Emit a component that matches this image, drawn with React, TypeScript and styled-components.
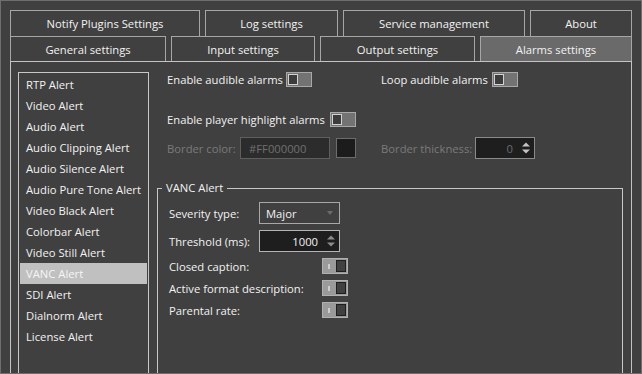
import * as React from 'react';
import styled, { createGlobalStyle } from 'styled-components';

const GlobalStyle = createGlobalStyle`
	html, body {
		margin: 0;
		padding: 0;
		background: #404040;
	}
	body {
		font-family: 'Open Sans', 'Noto Sans', sans-serif;
		font-size: 11.25px;
		color: #f2f2f2;
	}
	* {
		box-sizing: border-box;
	}
`;

const ROW_ONE = [
	{ title: 'Notify Plugins Settings', width: 190 },
	{ title: 'Log settings', width: 133 },
	{ title: 'Service management', width: 182 },
	{ title: 'About' }
];

const ROW_TWO = [
	{ title: 'General settings', width: 156 },
	{ title: 'Input settings', width: 144 },
	{ title: 'Output settings', width: 155 },
	{ title: 'Alarms settings', active: true }
];

const ALERTS = [
	'RTP Alert',
	'Video Alert',
	'Audio Alert',
	'Audio Clipping Alert',
	'Audio Silence Alert',
	'Audio Pure Tone Alert',
	'Video Black Alert',
	'Colorbar Alert',
	'Video Still Alert',
	'VANC Alert',
	'SDI Alert',
	'Dialnorm Alert',
	'License Alert'
];

const SpinArrows = ({ color }: { color: string }) => (
	<svg width='8' height='12' viewBox='0 0 8 12'>
		<polygon points='0,4.5 4,0.5 8,4.5' fill={color} />
		<polygon points='0,7.5 8,7.5 4,11.5' fill={color} />
	</svg>
);

const Toggle = ({ on, disabled }: { on?: boolean; disabled?: boolean }) =>
	on ? (
		<ToggleTrack $on $disabled={disabled}>
			<OnMark />
			<Knob $on />
		</ToggleTrack>
	) : (
		<ToggleTrack>
			<Knob />
		</ToggleTrack>
	);

export default function App() {
	return (
		<>
			<GlobalStyle />
			<Window>
				<TabRow>
					{ROW_ONE.map(tab => (
						<Tab key={tab.title} $w={tab.width} $h={26}>
							{tab.title}
						</Tab>
					))}
				</TabRow>
				<TabRow>
					{ROW_TWO.map(tab => (
						<Tab key={tab.title} $w={tab.width} $h={25} $active={tab.active}>
							{tab.title}
						</Tab>
					))}
				</TabRow>
				<Pane>
					<AlertList>
						{ALERTS.map(alert => (
							<AlertItem key={alert} $selected={alert === 'VANC Alert'}>
								{alert}
							</AlertItem>
						))}
					</AlertList>
					<Settings>
						<OptionRow $top={0} $h={15}>
							<Cell>
								<Label $w={119}>Enable audible alarms</Label>
								<Toggle />
							</Cell>
							<Cell>
								<Label $w={111}>Loop audible alarms</Label>
								<Toggle />
							</Cell>
						</OptionRow>
						<OptionRow $top={25} $h={15}>
							<Cell>
								<Label $w={163}>Enable player highlight alarms</Label>
								<Toggle />
							</Cell>
						</OptionRow>
						<OptionRow $top={10} $h={22}>
							<Cell>
								<Label $w={73} $disabled>
									Border color:
								</Label>
								<ColorField>#FF000000</ColorField>
								<Swatch />
							</Cell>
							<Cell>
								<Label $w={94} $disabled>
									Border thickness:
								</Label>
								<SpinBox $w={60} $disabled>
									<SpinValue>0</SpinValue>
									<SpinArrows color='#c4c4c4' />
								</SpinBox>
							</Cell>
						</OptionRow>
						<GroupBox>
							<GroupTitle>VANC Alert</GroupTitle>
							<GroupBody>
								<FormRow $top={6}>
									<Label $w={90}>Severity type:</Label>
									<Combo>
										<span>Major</span>
										<svg width='6' height='4' viewBox='0 0 6 4'>
											<polygon points='0,0 6,0 3,4' fill='#6c6c6c' />
										</svg>
									</Combo>
								</FormRow>
								<FormRow $top={6}>
									<Label $w={90}>Threshold (ms):</Label>
									<SpinBox $w={81}>
										<SpinValue>1000</SpinValue>
										<SpinArrows color='#8c8c8c' />
									</SpinBox>
								</FormRow>
								<FormRow $top={3}>
									<Label $w={153}>Closed caption:</Label>
									<Toggle on disabled />
								</FormRow>
								<FormRow $top={0}>
									<Label $w={153}>Active format description:</Label>
									<Toggle on disabled />
								</FormRow>
								<FormRow $top={0}>
									<Label $w={153}>Parental rate:</Label>
									<Toggle on disabled />
								</FormRow>
							</GroupBody>
						</GroupBox>
					</Settings>
				</Pane>
			</Window>
		</>
	);
}

const Window = styled.div`
	width: 642px;
	height: 374px;
	border: 1px solid #6e6e6e;
	background: #404040;
	padding: 9px 9px 0;
	overflow: hidden;
`;

const TabRow = styled.div`
	display: flex;
	gap: 5px;
`;

const Tab = styled.div<{ $w?: number; $h: number; $active?: boolean }>`
	flex: ${props => (props.$w ? `0 0 ${props.$w}px` : '1')};
	height: ${props => props.$h}px;
	border: 1px solid #a6a6a6;
	border-bottom: none;
	background: ${props => (props.$active ? '#6a6a6a' : '#404040')};
	display: flex;
	align-items: center;
	justify-content: center;
	white-space: nowrap;
`;

const Pane = styled.div`
	height: 340px;
	border: 1px solid #c4c4c4;
	padding: 10px 8px 10px 7px;
	display: flex;
	gap: 8px;
`;

const AlertList = styled.ul`
	flex: 0 0 131px;
	margin: 0;
	padding: 1px;
	list-style: none;
	border: 1px solid #c8c8c8;
`;

const AlertItem = styled.li<{ $selected?: boolean }>`
	height: 21px;
	line-height: 21px;
	padding-left: 6px;
	white-space: nowrap;
	background: ${props => (props.$selected ? '#c0c0c0' : 'transparent')};
	color: ${props => (props.$selected ? '#f6f6f6' : '#f2f2f2')};
`;

const Settings = styled.div`
	flex: 1;
	display: flex;
	flex-direction: column;
	min-width: 0;
`;

const OptionRow = styled.div<{ $top: number; $h: number }>`
	display: grid;
	grid-template-columns: 214px auto;
	align-items: center;
	height: ${props => props.$h}px;
	margin-top: ${props => props.$top}px;
	padding-left: 10px;
`;

const Cell = styled.div`
	display: flex;
	align-items: center;
`;

const Label = styled.span<{ $w: number; $disabled?: boolean }>`
	flex: 0 0 ${props => props.$w}px;
	white-space: nowrap;
	color: ${props => (props.$disabled ? '#7a7a7a' : '#f2f2f2')};
`;

const ToggleTrack = styled.span<{ $on?: boolean; $disabled?: boolean }>`
	width: 26px;
	height: ${props => (props.$on ? 16 : 15)}px;
	padding: 1px;
	display: flex;
	align-items: center;
	justify-content: space-between;
	border: 1px solid ${props => (props.$on ? '#b0b0b0' : '#a8a8a8')};
	background: ${props => (props.$on ? '#9a9a9a' : '#737373')};
`;

const Knob = styled.span<{ $on?: boolean }>`
	width: ${props => (props.$on ? 10 : 10)}px;
	height: ${props => (props.$on ? 12 : 11)}px;
	border: 1px solid ${props => (props.$on ? '#1e1e1e' : '#d2d2d2')};
	background: ${props => (props.$on ? '#404040' : '#3c3c3c')};
`;

const OnMark = styled.span`
	width: 2px;
	height: 5px;
	margin-left: 4px;
	background: #cdcdcd;
`;

const ColorField = styled.div`
	width: 90px;
	height: 22px;
	padding-left: 8px;
	display: flex;
	align-items: center;
	border: 1px solid #5e5e5e;
	background: #2c2c2c;
	color: #707070;
`;

const Swatch = styled.span`
	width: 20px;
	height: 20px;
	margin-left: 6px;
	border: 1px solid #6c6c6c;
	background: #1c1c1c;
`;

const SpinBox = styled.div<{ $w: number; $disabled?: boolean }>`
	width: ${props => props.$w}px;
	height: 22px;
	padding: 0 4px 0 6px;
	display: flex;
	align-items: center;
	gap: 9px;
	border: 1px solid ${props => (props.$disabled ? '#8a8a8a' : '#b4b4b4')};
	background: #1e1e1e;
	color: ${props => (props.$disabled ? '#6c6c6c' : '#f2f2f2')};
`;

const SpinValue = styled.span`
	flex: 1;
	text-align: right;
`;

const Combo = styled.div`
	width: 81px;
	height: 22px;
	padding: 0 6px;
	display: flex;
	align-items: center;
	justify-content: space-between;
	border: 1px solid #a8a8a8;
	background: #404040;
`;

const GroupBox = styled.fieldset`
	flex: 1;
	min-width: 0;
	margin: 21px 0 0;
	padding: 0;
	border: 1px solid #c8c8c8;
`;

const GroupTitle = styled.legend`
	margin-left: 4px;
	padding: 0 4px;
	line-height: 16px;
`;

const GroupBody = styled.div`
	padding-left: 11px;
	display: flex;
	flex-direction: column;
`;

const FormRow = styled.div<{ $top: number }>`
	display: flex;
	align-items: center;
	height: 22px;
	margin-top: ${props => props.$top}px;
`;
